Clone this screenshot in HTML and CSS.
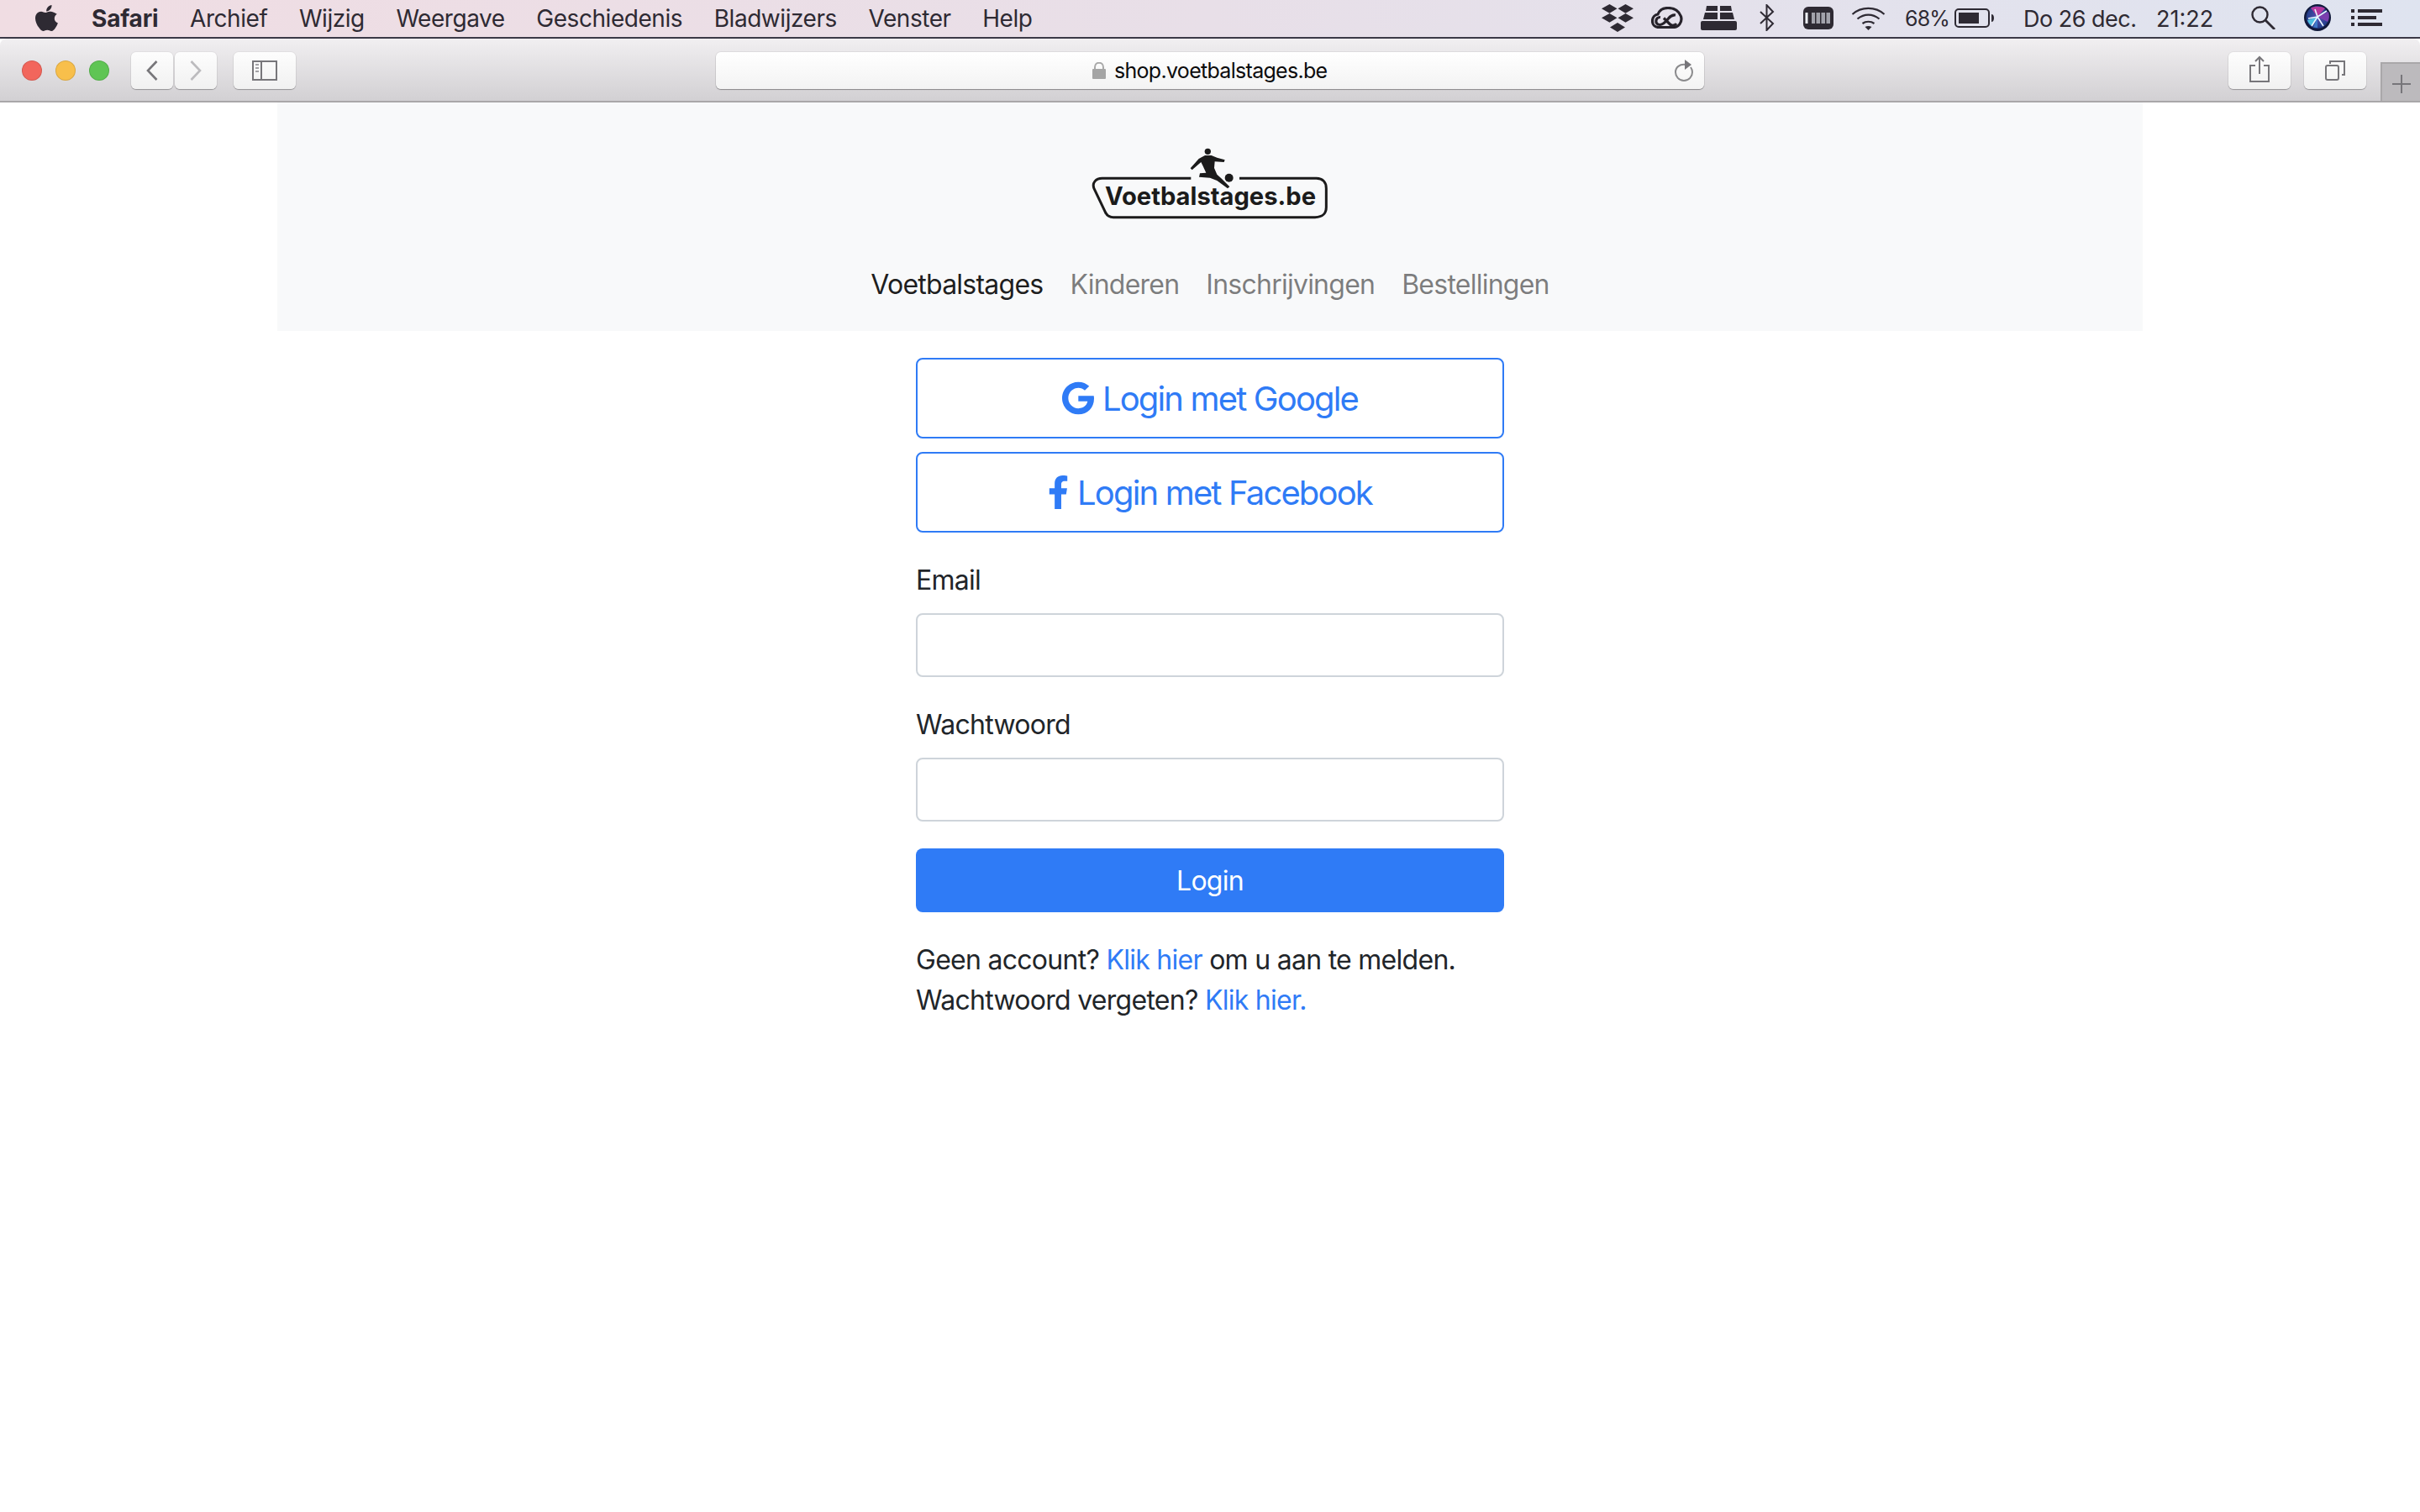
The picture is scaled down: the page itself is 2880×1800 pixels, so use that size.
FILE: index.html
```html
<!DOCTYPE html>
<html lang="nl">
<head>
<meta charset="utf-8">
<title>Voetbalstages</title>
<link rel="stylesheet" href="styles.css">
</head>
<body>
<div class="menubar">
  <nav class="menu-left">
    <svg class="apple" viewBox="0 0 27 31"><path d="M19.500 0c.2 2-.5 3.800-1.600 5.100-1.200 1.400-3 2.400-4.700 2.300-.2-1.800.6-3.700 1.700-4.900C16.100 1.100 18 .2 19.500 0zM25.800 10.700c-2 1.300-3 3.100-3 5.200 0 2.500 1.400 4.500 4.100 5.600-.7 2.100-1.700 4-3 5.800-1.300 1.900-2.700 3.700-4.700 3.700-1.900 0-2.600-1.200-4.900-1.200-2.300 0-3.100 1.200-4.900 1.200-2 0-3.500-1.900-4.900-3.900C2.100 24 0 19.500 0 15.900c0-5.300 3.500-8.100 6.900-8.100 2 0 3.700 1.300 4.900 1.300 1.200 0 3.100-1.400 5.400-1.400 1.600 0 4.900.4 8.600 3z"/></svg>
    <span class="menu-item menu-app">Safari</span>
    <span class="menu-item">Archief</span>
    <span class="menu-item">Wijzig</span>
    <span class="menu-item">Weergave</span>
    <span class="menu-item">Geschiedenis</span>
    <span class="menu-item">Bladwijzers</span>
    <span class="menu-item">Venster</span>
    <span class="menu-item">Help</span>
  </nav>
  <div class="menu-right">
    <svg class="st-dropbox" viewBox="0 0 38 33"><path d="M9.500 0l9 5.300-9 5.400-9.500-5.400zM28.500 0l9.500 5.300-9.500 5.400-9-5.400zM9.500 11l9 5.300-9 5.400-9.500-5.400zM28.500 11l9.500 5.300-9.500 5.400-9-5.400zM19 22l9 5.500-9 5.500-9-5.500z"/></svg>
    <svg class="st-cc" viewBox="0 0 38 26"><g fill="none" stroke="#26222a" stroke-width="3.200"><path d="M9 24.500C4 24.500 1.500 21 1.500 17c0-4.500 3-7.500 6.500-8C10 4 15 1.500 20 1.500c7 0 13 3.500 15.500 10 2 7-3 13-9 13z"/><path d="M11 12.500c-6-.5-7.500 9-.5 9 4.500 0 7-4 10-7.500 2.500-3 5-4.500 8.500-4"/><path d="M15 13.500l7.500 7.500c2 2 6 1.500 7.500-1"/></g></svg>
    <svg class="st-drive" viewBox="0 0 43 29"><path d="M7 0h13v6H6zM23 0h13l1 6H23zM5 8h15v8H3zM23 8h15l2 8H23z"/><rect y="18" width="43" height="11" rx="2"/></svg>
    <svg class="st-bt" viewBox="0 0 19 32"><path d="M2 9l15 14-7.500 8V1L17 9 2 23" fill="none" stroke="#2e2a33" stroke-width="2"/></svg>
    <svg class="st-mem" viewBox="0 0 36 27"><rect width="36" height="27" rx="6"/><path d="M2.500 7h3v13h-3z" fill="#eef0f6"/><path d="M10 7h4v13h-4zM15.500 7h4.500v13h-4.500zM21.500 7h4.500v13h-4.500zM27.500 7h4.500v13h-4.500z" fill="#a2a2ab"/></svg>
    <svg class="st-wifi" viewBox="0 0 41 29"><g fill="none" stroke="#2e2a33" stroke-width="2.200"><path d="M1.500 10C12 .5 29 .5 39.500 10"/><path d="M7.500 15.500c8-6.500 18-6.500 26 0"/><path d="M13.500 21c4-3 10-3 14 0"/></g><path d="M20.500 29l-4-4c2.300-1.300 5.700-1.300 8 0z"/></svg>
    <span class="st-text st-pct">68%</span>
    <svg class="st-batt" viewBox="0 0 47 23"><rect x="1" y="1" width="40" height="21" rx="4" fill="none" stroke="#2e2a33" stroke-width="2"/><rect x="5" y="5" width="24" height="13"/><path d="M44 7c2 0 3 2 3 4.500S46 16 44 16z"/></svg>
    <span class="st-text st-date">Do 26 dec.</span>
    <span class="st-text st-time">21:22</span>
    <svg class="st-search" viewBox="0 0 30 28"><circle cx="11.500" cy="10.500" r="9" fill="none" stroke="#2e2a33" stroke-width="2.400"/><path d="M18 17l11 11" stroke="#2e2a33" stroke-width="2.800"/></svg>
    <svg class="st-siri" viewBox="0 0 32 32"><defs><radialGradient id="siriBg" cx=".5" cy=".5" r=".55"><stop offset="0" stop-color="#5a4fb0"/><stop offset=".8" stop-color="#27408f"/><stop offset="1" stop-color="#1b2a63"/></radialGradient></defs><circle cx="16" cy="16" r="16" fill="#10183a"/><circle cx="16" cy="15.500" r="13.500" fill="url(#siriBg)"/><path d="M16 15L8 4.500C12 2 21 2 25 5z" fill="#b5379f"/><path d="M16 15L29 9c1.500 4 1 9-1 12z" fill="#7a3fae"/><path d="M16 15L4 19c1 3 3 6 6 7z" fill="#4fbfe0"/><path d="M16 15L11 27.500l5 .5z" fill="#3f79c8"/><path d="M16 15L9 26M16 15l11-7M16 15L13 6M16 15l7 11M16 15L5 17" stroke="#e9f6ff" stroke-width="1.600"/></svg>
    <svg class="st-list" viewBox="0 0 37 20"><path d="M0 0h4v4H0zM8 0h29v4H8zM0 8h4v4H0zM8 8h22v4H8zM0 16h4v4H0zM8 16h29v4H8z"/></svg>
  </div>
</div>

<div class="toolbar">
  <div class="lights">
    <span class="light light-red"></span>
    <span class="light light-yellow"></span>
    <span class="light light-green"></span>
  </div>
  <button class="tool tool-nav"><svg class="ic-chev" viewBox="0 0 14 24"><path d="M12.500 1L2 12l10.500 11" fill="none" stroke="#77767a" stroke-width="2.600"/></svg></button>
  <button class="tool tool-nav tool-next"><svg class="ic-chev" viewBox="0 0 14 24"><path d="M1.500 1L12 12 1.500 23" fill="none" stroke="#bcbbbe" stroke-width="2.600"/></svg></button>
  <button class="tool tool-wide tool-side"><svg class="ic-side" viewBox="0 0 30 24"><rect x="1" y="1" width="28" height="22" fill="none" stroke="#77767a" stroke-width="2"/><path d="M11 1v22" stroke="#77767a" stroke-width="2"/><path d="M4 5h4M4 9h4M4 13h4" stroke="#a3a2a6" stroke-width="2"/></svg></button>
  <div class="address">
    <svg class="ic-lock" viewBox="0 0 16 20"><path d="M3 9V6c0-7 10-7 10 0v3" fill="none" stroke="#a9a9a9" stroke-width="2"/><rect y="8" width="16" height="12" rx="1" fill="#a5a5a5"/></svg>
    <span class="url">shop.voetbalstages.be</span>
    <svg class="ic-reload" viewBox="0 0 24 26"><path d="M14 6C7 5 2 9 2 15c0 5 4 10 10 10s10-5 10-10c0-2-.5-4-2-6" fill="none" stroke="#8a8a8c" stroke-width="2"/><path d="M13 0l8 6-8 6z" fill="#77767a"/></svg>
  </div>
  <button class="tool tool-wide tool-share"><svg class="ic-share" viewBox="0 0 24 32"><path d="M7 12H1v19h22V12h-6" fill="none" stroke="#77767a" stroke-width="2"/><path d="M12 22V2M7 7l5-5 5 5" fill="none" stroke="#77767a" stroke-width="2"/></svg></button>
  <button class="tool tool-wide tool-tabs"><svg class="ic-tabs" viewBox="0 0 24 24"><rect x="1" y="6" width="15" height="17" rx="2" fill="none" stroke="#77767a" stroke-width="2"/><path d="M6 4V1h17v16h-3" fill="none" stroke="#77767a" stroke-width="2"/></svg></button>
  <div class="new-tab"><svg class="ic-plus" viewBox="0 0 22 22"><path d="M11 0v22M0 11h22" stroke="#77767a" stroke-width="2"/></svg></div>
</div>

<div class="page">
  <header class="site-header">
    <svg class="logo" viewBox="0 0 960 315">
      <path class="logo-frame" d="M412 142H95C72 142 58 158 66 178L106 262C112 276 120 281 135 281H855C882 281 895 266 895 245V178C895 156 882 142 860 142H585"/>
      <circle cx="472" cy="46" r="11"/>
      <path d="M462 60L440 72 410 106 416 112 448 84 455 98 466 122 444 124 441 137 480 140 505 150 543 178 550 172 520 142 505 128 495 105 497 82 530 84 533 76 505 68 485 60Z"/>
      <circle cx="548" cy="140" r="15"/>
      <text class="logo-text" x="105" y="237" textLength="753" lengthAdjust="spacingAndGlyphs">Voetbalstages.be</text>
    </svg>
    <nav class="site-nav">
      <a class="nav-link nav-active">Voetbalstages</a>
      <a class="nav-link">Kinderen</a>
      <a class="nav-link">Inschrijvingen</a>
      <a class="nav-link">Bestellingen</a>
    </nav>
  </header>

  <main class="login">
    <a class="btn-outline">
      <svg class="ic-google" viewBox="0 0 488 512"><path d="M488 261.800C488 403.300 391.100 504 248 504 110.800 504 0 393.200 0 256S110.800 8 248 8c66.800 0 123 24.500 166.300 64.900l-67.500 64.900C258.500 52.600 94.300 116.600 94.300 256c0 86.500 69.100 156.600 153.700 156.600 98.200 0 135-70.400 140.800-106.900H248v-85.300h236.100c2.300 12.700 3.900 24.900 3.900 41.400z"/></svg>
      <span>Login met Google</span>
    </a>
    <a class="btn-outline">
      <svg class="ic-facebook" viewBox="0 0 320 512"><path d="M279.140 288l14.220-92.660h-88.910v-60.130c0-25.350 12.420-50.060 52.240-50.060h40.420V6.260S260.430 0 225.360 0c-73.220 0-121.080 44.380-121.080 124.720v70.620H22.890V288h81.390v224h100.170V288z"/></svg>
      <span>Login met Facebook</span>
    </a>
    <form class="login-form">
      <label class="field-label" for="email">Email</label>
      <input class="field-input" id="email" type="email">
      <label class="field-label" for="password">Wachtwoord</label>
      <input class="field-input" id="password" type="password">
      <button class="btn-primary" type="button">Login</button>
    </form>
    <p class="hint">Geen account? <a class="link">Klik hier</a> om u aan te melden.<br>Wachtwoord vergeten? <a class="link">Klik hier.</a></p>
  </main>
</div>
</body>
</html>
```

FILE: styles.css
```css
* { box-sizing: border-box; }
html, body { margin: 0; padding: 0; height: 100%; }
body {
  background: #fff;
  font-family: Inter, "Liberation Sans", sans-serif;
  color: #212529;
  overflow: hidden;
}
svg { display: block; flex: none; }

/* macOS menu bar */
.menubar {
  height: 46px;
  display: flex;
  justify-content: space-between;
  align-items: center;
  padding-bottom: 2px;
  border-bottom: 2px solid #3b3947;
  background: linear-gradient(90deg, #f0dde3 0%, #e8dfe8 50%, #dfe4f0 100%);
  color: #2e2a33;
}
.menubar svg { fill: #2e2a33; }
.menu-left { display: flex; align-items: center; padding-left: 42px; }
.apple { width: 27px; height: 31px; margin-right: 40px; }
.menu-item { padding-top: 2px; font-size: 28px; letter-spacing: -0.45px; margin-right: 37.6px; }
.menu-app { font-weight: 700; letter-spacing: -0.2px; }
.menu-right { display: flex; align-items: center; padding-right: 45px; }
.st-text { padding-top: 2px; font-size: 27px; letter-spacing: -0.5px; white-space: nowrap; flex: none; }
.st-dropbox { width: 38px; height: 33px; }
.st-cc { width: 38px; height: 26px; margin-left: 21px; }
.st-drive { width: 43px; height: 29px; margin-left: 21px; }
.st-bt { width: 19px; height: 32px; margin-left: 26px; }
.st-mem { width: 36px; height: 27px; margin-left: 34px; }
.st-wifi { width: 41px; height: 29px; margin-left: 21px; }
.st-pct { width: 50px; margin-left: 23px; font-size: 25px; letter-spacing: -0.8px; }
.st-batt { width: 47px; height: 23px; margin-left: 9px; }
.st-date { width: 140px; margin-left: 35px; }
.st-time { width: 70px; margin-left: 18px; letter-spacing: 0; }
.st-search { width: 30px; height: 28px; margin-left: 42px; }
.st-siri { width: 32px; height: 32px; margin-left: 34px; }
.st-list { width: 37px; height: 20px; margin-left: 24px; }

/* Safari toolbar */
.toolbar {
  height: 76px;
  display: flex;
  align-items: center;
  padding: 2px 0 0 26px;
  border-bottom: 2px solid #a9a7a9;
  border-radius: 8px 8px 0 0;
  background: linear-gradient(180deg, #f1eff1 0%, #d2d0d3 100%);
}
.lights { display: flex; gap: 16px; margin-right: 26px; }
.light { width: 24px; height: 24px; border-radius: 50%; border: 1px solid rgba(0, 0, 0, .12); }
.light-red { background: #f2665c; }
.light-yellow { background: #f8bf4b; }
.light-green { background: #5fc554; }
.tool {
  height: 44px;
  padding: 0;
  display: flex;
  align-items: center;
  justify-content: center;
  flex: none;
  border: 0;
  border-radius: 6px;
  background: linear-gradient(180deg, #fdfdfd 0%, #f1f1f1 100%);
  box-shadow: 0 1px 1px rgba(0, 0, 0, .28), 0 0 0 1px rgba(0, 0, 0, .04);
}
.tool-nav { width: 50px; }
.tool-next { margin-left: 2px; }
.tool-wide { width: 74px; }
.tool-side { margin-left: 20px; }
.tool-tabs { margin-left: 16px; }
.ic-chev { width: 14px; height: 24px; }
.ic-side { width: 30px; height: 24px; }
.ic-share { width: 24px; height: 32px; margin-bottom: 4px; }
.ic-tabs { width: 24px; height: 24px; }
.address {
  width: 1176px;
  height: 44px;
  margin: 0 624px 0 500px;
  padding-left: 448px;
  display: flex;
  align-items: center;
  flex: none;
  border-radius: 6px;
  background: linear-gradient(180deg, #ffffff 0%, #f3f3f3 100%);
  box-shadow: 0 1px 1px rgba(0, 0, 0, .32), 0 0 0 1px rgba(0, 0, 0, .06);
}
.ic-lock { width: 16px; height: 20px; }
.url { margin-left: 10px; width: 666px; font-size: 25px; letter-spacing: -0.7px; color: #0c0c0d; flex: none; white-space: nowrap; }
.ic-reload { width: 24px; height: 26px; }
.new-tab {
  width: 47px;
  height: 46px;
  padding-top: 4px;
  margin-left: 17px;
  align-self: flex-end;
  display: flex;
  align-items: center;
  justify-content: center;
  flex: none;
  background: #bcbabd;
  border-left: 2px solid #a9a7a9;
  border-top: 2px solid #a9a7a9;
}
.ic-plus { width: 22px; height: 22px; }

/* Page */
.page { width: 2220px; margin: 0 auto; }
.site-header {
  height: 272px;
  padding-top: 43px;
  display: flex;
  flex-direction: column;
  align-items: center;
  background: #f8f9fa;
}
.logo { width: 320px; height: 105px; fill: #1b1b1b; }
.logo-frame { fill: none; stroke: #1b1b1b; stroke-width: 9; }
.logo-text { font-family: Inter, "Liberation Sans", sans-serif; font-size: 88px; font-weight: 700; }
.site-nav { display: flex; margin-top: 45px; }
.nav-link { padding: 0 16px; font-size: 32px; line-height: 48px; letter-spacing: -0.76px; color: rgba(0, 0, 0, .5); }
.nav-active { color: rgba(0, 0, 0, .9); }

.login { width: 700px; margin: 32px auto 0; }
.btn-outline {
  height: 96px;
  margin-bottom: 16px;
  display: flex;
  align-items: center;
  justify-content: center;
  gap: 10px;
  border: 2px solid #2f7bf6;
  border-radius: 8px;
  font-size: 40px;
  letter-spacing: -1.85px;
  color: #2f7bf6;
}
.ic-google { width: 38px; height: 40px; fill: #2f7bf6; }
.ic-facebook { width: 25px; height: 40px; fill: #2f7bf6; }
.login-form { margin-top: 32px; display: flex; flex-direction: column; }
.field-label { font-size: 32px; line-height: 50px; letter-spacing: -0.72px; margin-bottom: 14px; }
.field-input {
  height: 76px;
  margin-bottom: 32px;
  border: 2px solid #ced4da;
  border-radius: 8px;
  background: #fff;
}
.btn-primary {
  height: 76px;
  padding: 2px 0 0;
  border: 0;
  border-radius: 8px;
  background: #2f7bf6;
  color: #fff;
  font: 32px/48px Inter, "Liberation Sans", sans-serif;
  letter-spacing: -0.72px;
}
.hint { margin: 33px 0 0; font-size: 32px; line-height: 48px; letter-spacing: -0.72px; }
.link { color: #2f7bf6; }
```
